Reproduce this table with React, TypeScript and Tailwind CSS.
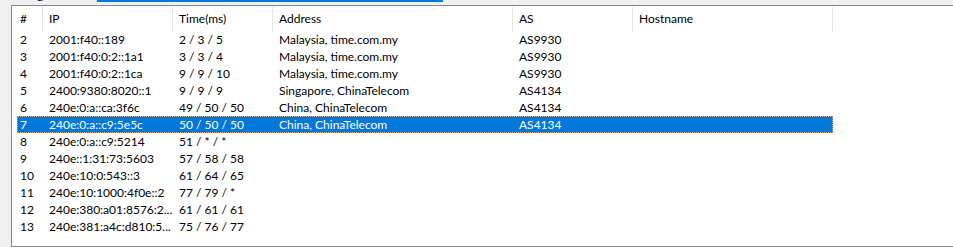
import React from 'react'

type Hop = { n: number; ip: string; time: string; addr?: string; as?: string }

const hops: Hop[] = [
  { n: 2, ip: '2001:f40::189', time: '2 / 3 / 5', addr: 'Malaysia, time.com.my', as: 'AS9930' },
  { n: 3, ip: '2001:f40:0:2::1a1', time: '3 / 3 / 4', addr: 'Malaysia, time.com.my', as: 'AS9930' },
  { n: 4, ip: '2001:f40:0:2::1ca', time: '9 / 9 / 10', addr: 'Malaysia, time.com.my', as: 'AS9930' },
  { n: 5, ip: '2400:9380:8020::1', time: '9 / 9 / 9', addr: 'Singapore, ChinaTelecom', as: 'AS4134' },
  { n: 6, ip: '240e:0:a::ca:3f6c', time: '49 / 50 / 50', addr: 'China, ChinaTelecom', as: 'AS4134' },
  { n: 7, ip: '240e:0:a::c9:5e5c', time: '50 / 50 / 50', addr: 'China, ChinaTelecom', as: 'AS4134' },
  { n: 8, ip: '240e:0:a::c9:5214', time: '51 / * / *' },
  { n: 9, ip: '240e::1:31:73:5603', time: '57 / 58 / 58' },
  { n: 10, ip: '240e:10:0:543::3', time: '61 / 64 / 65' },
  { n: 11, ip: '240e:10:1000:4f0e::2', time: '77 / 79 / *' },
  { n: 12, ip: '240e:380:a01:8576:2...', time: '61 / 61 / 61' },
  { n: 13, ip: '240e:381:a4c:d810:5...', time: '75 / 76 / 77' },
]

const SELECTED = 7

export default function App() {
  return (
    <div
      className="w-[953px] h-[247px] overflow-hidden bg-[#f0f0f0] text-[12px] text-black"
      style={{ fontFamily: 'Lato, "Liberation Sans", sans-serif' }}
    >
      {/* tail of the target input row above */}
      <div className="h-[5px] flex items-end overflow-hidden">
        <span className="ml-[21px] mb-[3px] leading-[15px] w-[76px] shrink-0">Target</span>
        <div className="w-[346px] h-[5px] border-b-2 border-[#0078d7] self-start -mt-[3px]" />
      </div>

      {/* list view */}
      <div className="ml-[11px] h-[242px] border-l border-t border-b border-[#828790] bg-white">
        {/* header */}
        <div className="flex h-[25px] items-center">
          <HeaderCell w="w-[31px]" pl="pl-[8px]">#</HeaderCell>
          <HeaderCell w="w-[130px]">IP</HeaderCell>
          <HeaderCell w="w-[100px]">Time(ms)</HeaderCell>
          <HeaderCell w="w-[240px]">Address</HeaderCell>
          <HeaderCell w="w-[120px]">AS</HeaderCell>
          <HeaderCell w="w-[200px]">Hostname</HeaderCell>
        </div>

        {/* rows */}
        <div className="pl-[5px]">
          {hops.map((h) => {
            const sel = h.n === SELECTED
            return (
              <div
                key={h.n}
                className={`flex h-[17px] w-[816px] items-center leading-[17px] ${
                  sel ? 'bg-[#0078d7] text-white outline-1 outline-dotted outline-[#f7a35c] -outline-offset-1' : ''
                }`}
              >
                <span className="w-[26px] pl-[3px] shrink-0">{h.n}</span>
                <span className="w-[130px] pl-[6px] shrink-0 whitespace-nowrap">{h.ip}</span>
                <span className="w-[100px] pl-[6px] shrink-0 whitespace-nowrap">{h.time}</span>
                <span className="w-[240px] pl-[6px] shrink-0 whitespace-nowrap">{h.addr}</span>
                <span className="w-[120px] pl-[6px] shrink-0 whitespace-nowrap">{h.as}</span>
                <span className="w-[200px] pl-[6px] shrink-0" />
              </div>
            )
          })}
        </div>
      </div>
    </div>
  )
}

function HeaderCell({ w, pl = 'pl-[6px]', children }: { w: string; pl?: string; children: React.ReactNode }) {
  return (
    <div className={`${w} ${pl} h-[24px] flex items-center shrink-0 border-r border-[#e5e5e5] whitespace-nowrap`}>
      {children}
    </div>
  )
}
